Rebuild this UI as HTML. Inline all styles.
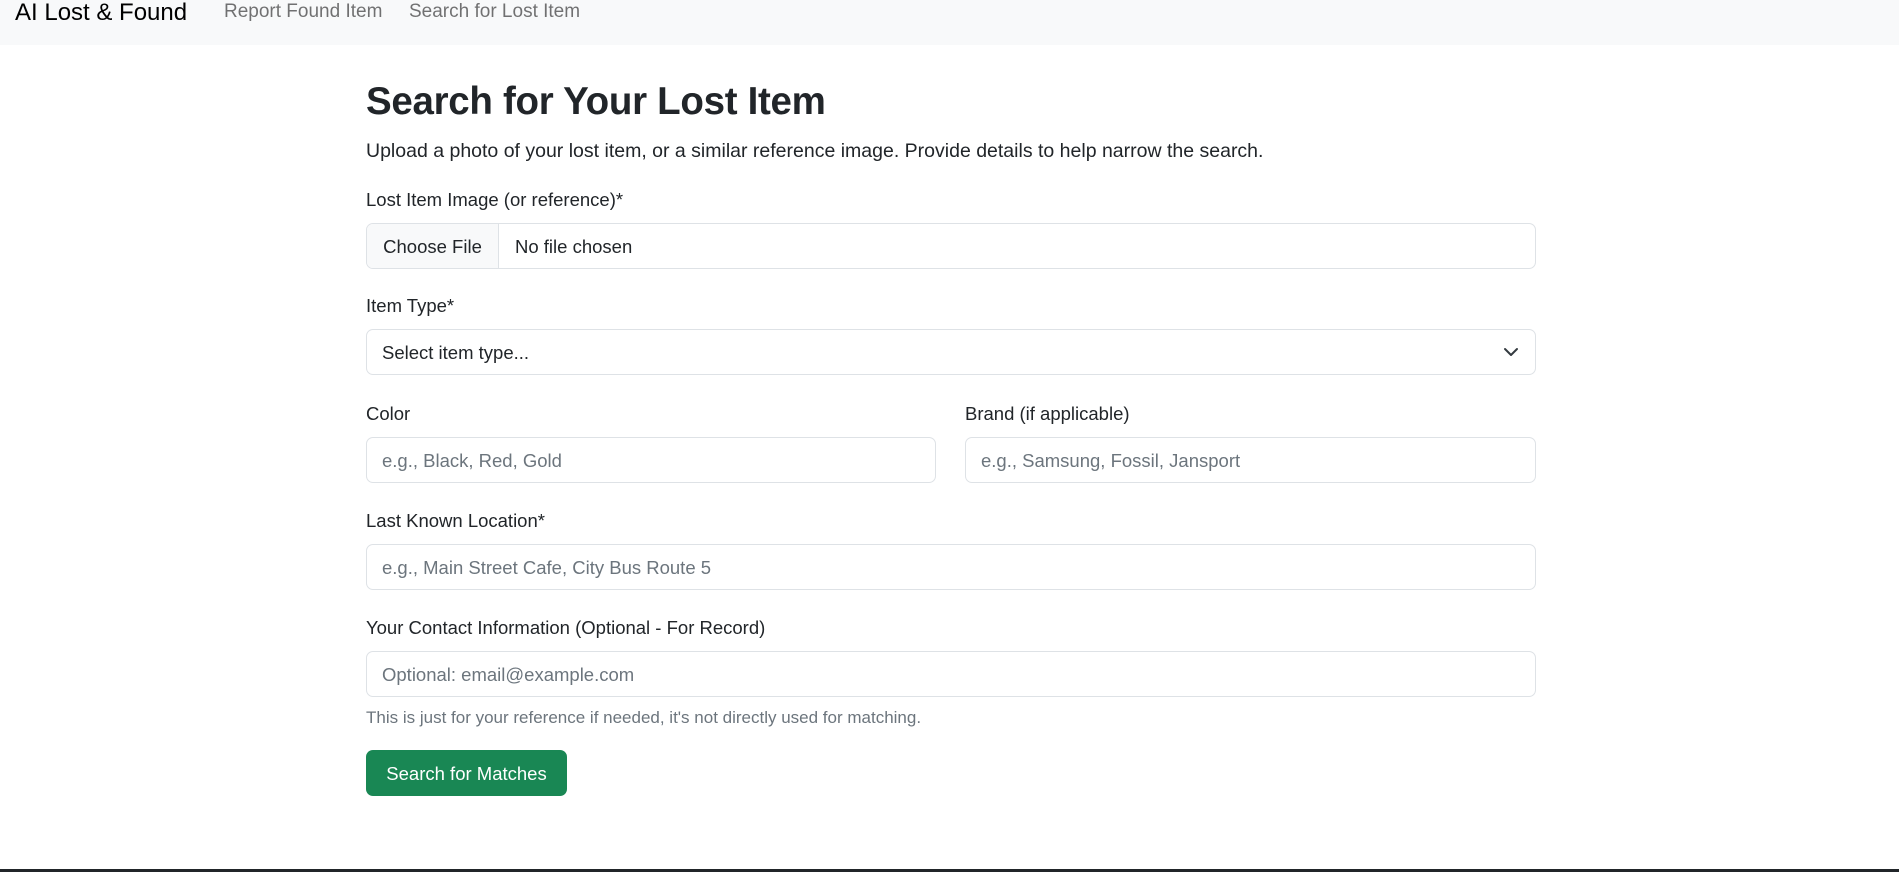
<!DOCTYPE html>
<html><head><meta charset="utf-8">
<style>
*{box-sizing:border-box;margin:0;padding:0}
html,body{width:1899px;height:872px;overflow:hidden;background:#fff;font-family:"Liberation Sans",sans-serif;color:#212529}
.nav{position:absolute;left:0;top:0;width:1899px;height:45px;background:#f8f9fa}
.abs{position:absolute;white-space:nowrap}
.brand{left:15px;top:-2px;font-size:24px;line-height:30px;color:#000}
.nl{top:0;font-size:19px;line-height:24px;color:rgba(0,0,0,.55)}
h1{position:absolute;left:366px;top:79px;font-size:38.5px;line-height:46px;font-weight:bold;letter-spacing:-0.3px;white-space:nowrap}
.t{font-size:18.5px;line-height:24px}
.lbl{left:366px}
.box{position:absolute;height:46px;border:1px solid #dee2e6;border-radius:7px;background:#fff;font-size:18.5px;line-height:46px;padding-left:15px;color:#6c757d;white-space:nowrap;overflow:hidden}
.dark{color:#212529}
.btn{position:absolute;left:366px;top:750px;width:201px;height:46px;background:#198754;border-radius:7px;color:#fff;font-size:18.5px;line-height:47px;text-align:center}
.help{left:366px;top:707px;font-size:17px;line-height:22px;color:#6c757d}
.bar{position:absolute;left:0;top:869px;width:1899px;height:3px;background:#212529}
</style></head><body>
<div class="nav"></div>
<div class="abs brand">AI Lost &amp; Found</div>
<div class="abs nl" style="left:224px">Report Found Item</div>
<div class="abs nl" style="left:409px">Search for Lost Item</div>

<h1>Search for Your Lost Item</h1>
<div class="abs" style="left:366px;top:138px;font-size:19.5px;line-height:26px">Upload a photo of your lost item, or a similar reference image. Provide details to help narrow the search.</div>

<div class="abs t lbl" style="top:188px">Lost Item Image (or reference)*</div>
<div class="box dark" style="left:366px;top:223px;width:1170px;padding-left:0">
  <span style="display:inline-block;width:132px;height:44px;background:#f8f9fa;border-right:1px solid #dee2e6;text-align:center;vertical-align:top">Choose File</span><span style="padding-left:16px">No file chosen</span>
</div>

<div class="abs t lbl" style="top:294px">Item Type*</div>
<div class="box dark" style="left:366px;top:329px;width:1170px">Select item type...
  <svg style="position:absolute;left:1136px;top:16px" width="16" height="12" viewBox="0 0 16 12"><path d="M2 3l6 6 6-6" fill="none" stroke="#343a40" stroke-width="2" stroke-linecap="round" stroke-linejoin="round"/></svg>
</div>

<div class="abs t lbl" style="top:402px">Color</div>
<div class="abs t" style="left:965px;top:402px">Brand (if applicable)</div>
<div class="box" style="left:366px;top:437px;width:570px">e.g., Black, Red, Gold</div>
<div class="box" style="left:965px;top:437px;width:571px">e.g., Samsung, Fossil, Jansport</div>

<div class="abs t lbl" style="top:509px">Last Known Location*</div>
<div class="box" style="left:366px;top:544px;width:1170px">e.g., Main Street Cafe, City Bus Route 5</div>

<div class="abs t lbl" style="top:616px">Your Contact Information (Optional - For Record)</div>
<div class="box" style="left:366px;top:651px;width:1170px">Optional: email@example.com</div>
<div class="abs help">This is just for your reference if needed, it's not directly used for matching.</div>

<div class="btn">Search for Matches</div>
<div class="bar"></div>
</body></html>
